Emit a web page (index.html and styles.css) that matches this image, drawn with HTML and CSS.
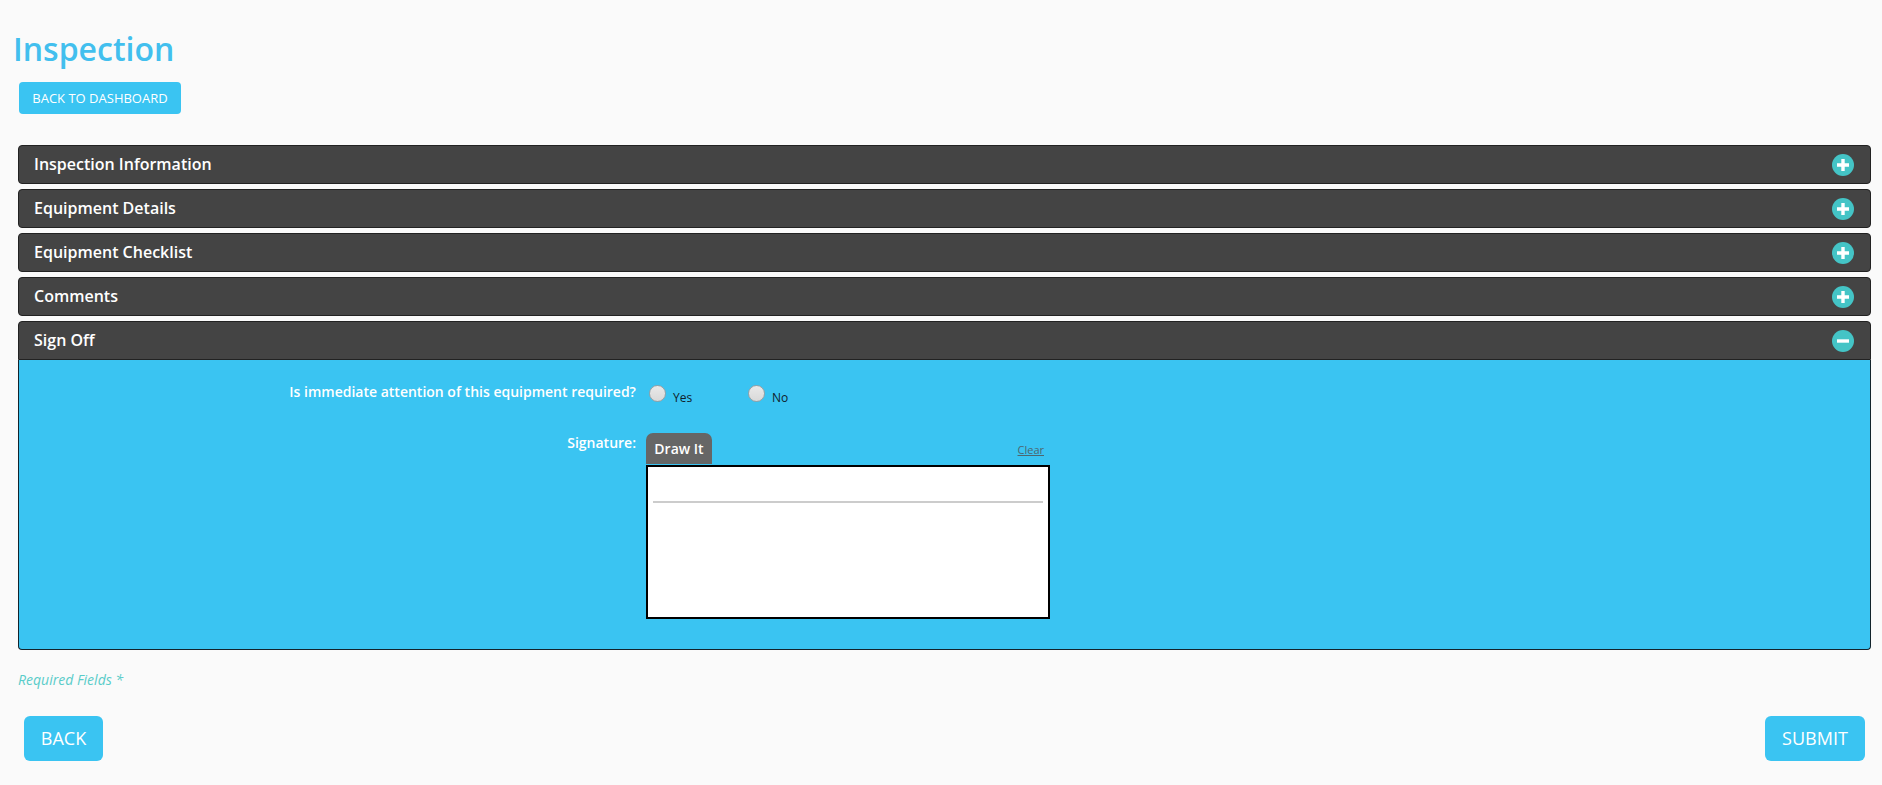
FILE: index.html
```html
<!DOCTYPE html>
<html lang="en">
<head>
<meta charset="utf-8">
<title>Inspection</title>
<link rel="stylesheet" href="styles.css">
</head>
<body>
<h1 class="title">Inspection</h1>
<a class="btn btn-small">BACK TO DASHBOARD</a>
<main class="accordion">
  <h2 class="bar"><span>Inspection Information</span><svg class="icon" viewBox="0 0 22 22"><circle cx="11" cy="11" r="11"/><path d="M5 11H17M11 5V17"/></svg></h2>
  <h2 class="bar"><span>Equipment Details</span><svg class="icon" viewBox="0 0 22 22"><circle cx="11" cy="11" r="11"/><path d="M5 11H17M11 5V17"/></svg></h2>
  <h2 class="bar"><span>Equipment Checklist</span><svg class="icon" viewBox="0 0 22 22"><circle cx="11" cy="11" r="11"/><path d="M5 11H17M11 5V17"/></svg></h2>
  <h2 class="bar"><span>Comments</span><svg class="icon" viewBox="0 0 22 22"><circle cx="11" cy="11" r="11"/><path d="M5 11H17M11 5V17"/></svg></h2>
  <section>
    <h2 class="bar bar-open"><span>Sign Off</span><svg class="icon" viewBox="0 0 22 22"><circle cx="11" cy="11" r="11"/><path d="M5 11H17"/></svg></h2>
    <div class="panel">
      <div class="row">
        <div class="label">Is immediate attention of this equipment required?</div>
        <div class="options">
          <label class="option"><input class="radio" type="radio" name="attention"><span>Yes</span></label>
          <label class="option"><input class="radio" type="radio" name="attention"><span>No</span></label>
        </div>
      </div>
      <div class="row row-signature">
        <div class="label">Signature:</div>
        <div class="signature">
          <div class="signature-nav"><span class="tab">Draw It</span><a class="clear">Clear</a></div>
          <div class="pad"><div class="pad-line"></div></div>
        </div>
      </div>
    </div>
  </section>
</main>
<p class="required">Required Fields *</p>
<footer class="actions"><a class="btn btn-large">BACK</a><a class="btn btn-large btn-submit">SUBMIT</a></footer>
</body>
</html>
```
FILE: styles.css
```css
* { box-sizing: border-box; }
body {
  margin: 0;
  padding: 24px 11px 0 18px;
  height: 785px;
  overflow: hidden;
  background: #fafafa;
  font-family: "Open Sans", sans-serif;
}
.title {
  margin: 0 0 8px -5px;
  font-size: 32px;
  line-height: 50px;
  font-weight: 600;
  color: #42bfee;
}
.btn {
  display: flex;
  align-items: center;
  justify-content: center;
  background: #3ac4f2;
  color: #fff;
}
.btn-small {
  width: 162px;
  height: 32px;
  margin-left: 1px;
  border-radius: 4px;
  font-size: 13px;
}
.accordion {
  display: flex;
  flex-direction: column;
  gap: 5px;
  margin-top: 31px;
}
.bar {
  display: flex;
  align-items: center;
  justify-content: space-between;
  height: 39px;
  margin: 0;
  padding: 0 16px 0 15px;
  border: 1px solid #222;
  border-radius: 4px;
  background: #444;
  color: #fff;
  font-size: 16px;
  line-height: 22px;
  font-weight: 600;
}
.bar span { margin-bottom: 2px; }
.bar-open { border-radius: 4px 4px 0 0; }
.icon {
  width: 22px;
  height: 22px;
  margin-top: 1px;
}
.icon circle { fill: #44c4c6; }
.icon path { stroke: #fff; stroke-width: 3.4; }
.panel {
  height: 290px;
  padding-top: 21px;
  border: 1px solid #13232b;
  border-top: 0;
  border-radius: 0 0 4px 4px;
  background: #3ac4f2;
}
.row {
  display: flex;
  gap: 10px;
  height: 52px;
}
.label {
  width: 617px;
  text-align: right;
  color: #fff;
  font-size: 14px;
  line-height: 22px;
  font-weight: 600;
}
.row-signature .label { line-height: 20px; }
.options { display: flex; padding: 4px 0 0 3px; }
.option {
  display: flex;
  width: 99px;
  height: 22px;
  gap: 7px;
  font-size: 12px;
  line-height: 26px;
  color: #10222b;
}
.radio {
  appearance: none;
  width: 17px;
  height: 17px;
  margin: 0;
  border: 1px solid #999fa3;
  border-radius: 50%;
  background: linear-gradient(#e9e9e9, #d9d9d9);
}
.signature { width: 404px; }
.signature-nav {
  display: flex;
  align-items: flex-start;
  justify-content: space-between;
  height: 32px;
  padding-right: 6px;
}
.tab {
  width: 66px;
  height: 31px;
  border-radius: 7px 7px 0 0;
  background: #666;
  color: #fff;
  font-size: 14px;
  line-height: 31px;
  font-weight: 600;
  text-align: center;
}
.clear {
  margin-top: 8px;
  font-size: 11px;
  line-height: 18px;
  color: #4d666f;
  text-decoration: underline;
}
.pad {
  height: 154px;
  padding: 34px 5px 0;
  border: 2px solid #000;
  background: #fff;
}
.pad-line { height: 2px; background: #ccc; }
.required {
  margin: 19px 0 0;
  color: #59ccc9;
  font-size: 14px;
  line-height: 22px;
  font-style: italic;
}
.actions {
  display: flex;
  justify-content: space-between;
  padding: 25px 6px 0;
}
.btn-large {
  width: 79px;
  height: 45px;
  padding-bottom: 2px;
  border-radius: 6px;
  font-size: 18px;
}
.btn-submit { width: 100px; }
```
